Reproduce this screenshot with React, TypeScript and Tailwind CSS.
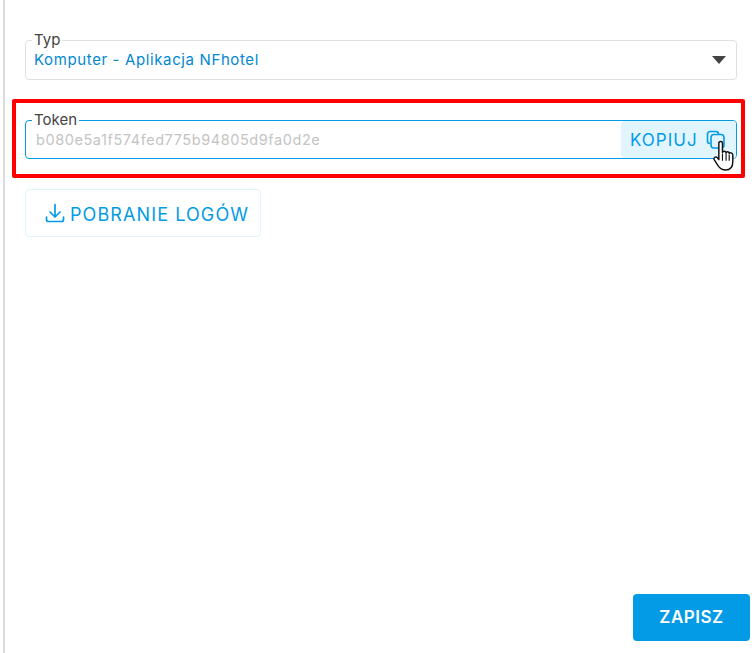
const font = "font-['Inter','Liberation_Sans',sans-serif]";

function CopyIcon() {
  return (
    <svg width="20" height="20" viewBox="0 0 20 20" fill="none" stroke="#039be5" strokeWidth="1.6" className="shrink-0">
      <path d="M4 13.500 A2.500 2.500 0 0 1 1.500 11 V4 A2.500 2.500 0 0 1 4 1.500 H10 A2.500 2.500 0 0 1 12.500 4" />
      <rect x="5" y="4.500" width="13" height="13.500" rx="3" />
    </svg>
  );
}

function HandCursor() {
  return (
    <svg width="23" height="31" viewBox="0 0 21 30" className="absolute left-[696px] top-[37px]">
      <path
        d="M6 3 C6 1 9.500 1 9.500 3 V12 C10 10.500 13 10.500 13 12.500 C13.500 11 16 11 16 13 C16.500 12 19.500 12 19.500 14.500 V21 C19.500 26 17 29 12.500 29 C8.500 29 7 27.500 5 24.500 L1.500 19 C0.500 17 3 15.500 4.500 17 L6 19 Z"
        fill="#fff"
        stroke="#111"
        strokeWidth="1.4"
        strokeLinejoin="round"
      />
      <path d="M9.500 13 V20 M13 13 V20 M16 14 V20" stroke="#111" strokeWidth="1.1" fill="none" />
    </svg>
  );
}

export default function App() {
  return (
    <div className={`${font} relative h-[653px] w-[752px] overflow-hidden bg-white`}>
      <div className="ml-[3px] flex h-full flex-col border-l-2 border-[#dcdcdc] pl-[20px] pr-[15px] pt-[32px]">
        <fieldset className="flex h-[48px] items-center justify-between rounded border border-[#e0e0e0] pl-[8px] pr-[10px]">
          <legend className="-ml-[2px] px-[2px] text-[15px] leading-[16px] text-[#444]">Typ</legend>
          <span className="mt-[1px] text-[15px] tracking-[0.62px] text-[#0288d1]">Komputer - Aplikacja NFhotel</span>
          <span className="mt-[1px] h-0 w-0 border-x-[7px] border-t-[8px] border-x-transparent border-t-[#444]" />
        </fieldset>

        <div className="relative -ml-[13px] -mr-[8px] mt-[19px] h-[79px] rounded-[2px] border-4 border-[#ff0000] pl-[9px] pr-[4px] pt-[9px]">
          <fieldset className="h-[47px] rounded border border-[#039be5]">
            <legend className="ml-[6px] px-[2px] text-[15px] leading-[16px] text-[#444]">Token</legend>
            <div className="-mt-[7px] flex h-[37px] items-center justify-between pl-[10px]">
              <span className="text-[14.500px] tracking-[0.57px] text-[#c4c4c4]">b080e5a1f574fed775b94805d9fa0d2e</span>
              <div className="flex h-full w-[115px] items-center gap-[8px] rounded-l rounded-r-[3px] bg-[#e1f5fe] pl-[9px] text-[#039be5]">
                <span className="mt-[3px] text-[17px] tracking-[1px]">KOPIUJ</span>
                <CopyIcon />
              </div>
            </div>
          </fieldset>
          <HandCursor />
        </div>

        <button className="mt-[11px] flex h-[48px] w-[236px] items-center gap-[4px] rounded border border-[#e1f5fe] pl-[18px] text-[#039be5]">
          <svg width="22" height="22" viewBox="0 0 22 22" fill="none" stroke="#039be5" strokeWidth="1.700" strokeLinecap="round" strokeLinejoin="round">
            <path d="M11 2.500 V15 M6 10 L11 15 L16 10 M2.500 15 V17.500 A2 2 0 0 0 4.500 19.500 H17.500 A2 2 0 0 0 19.500 17.500 V15" />
          </svg>
          <span className="mt-[3px] text-[18px] tracking-[1.1px]">POBRANIE LOGÓW</span>
        </button>

        <div className="mt-auto mb-[12px] -mr-[13px] flex justify-end">
          <button className="h-[47px] w-[117px] rounded bg-[#039be5] pt-[1px] text-[17px] font-semibold tracking-[0.5px] text-white">
            ZAPISZ
          </button>
        </div>
      </div>
    </div>
  );
}
